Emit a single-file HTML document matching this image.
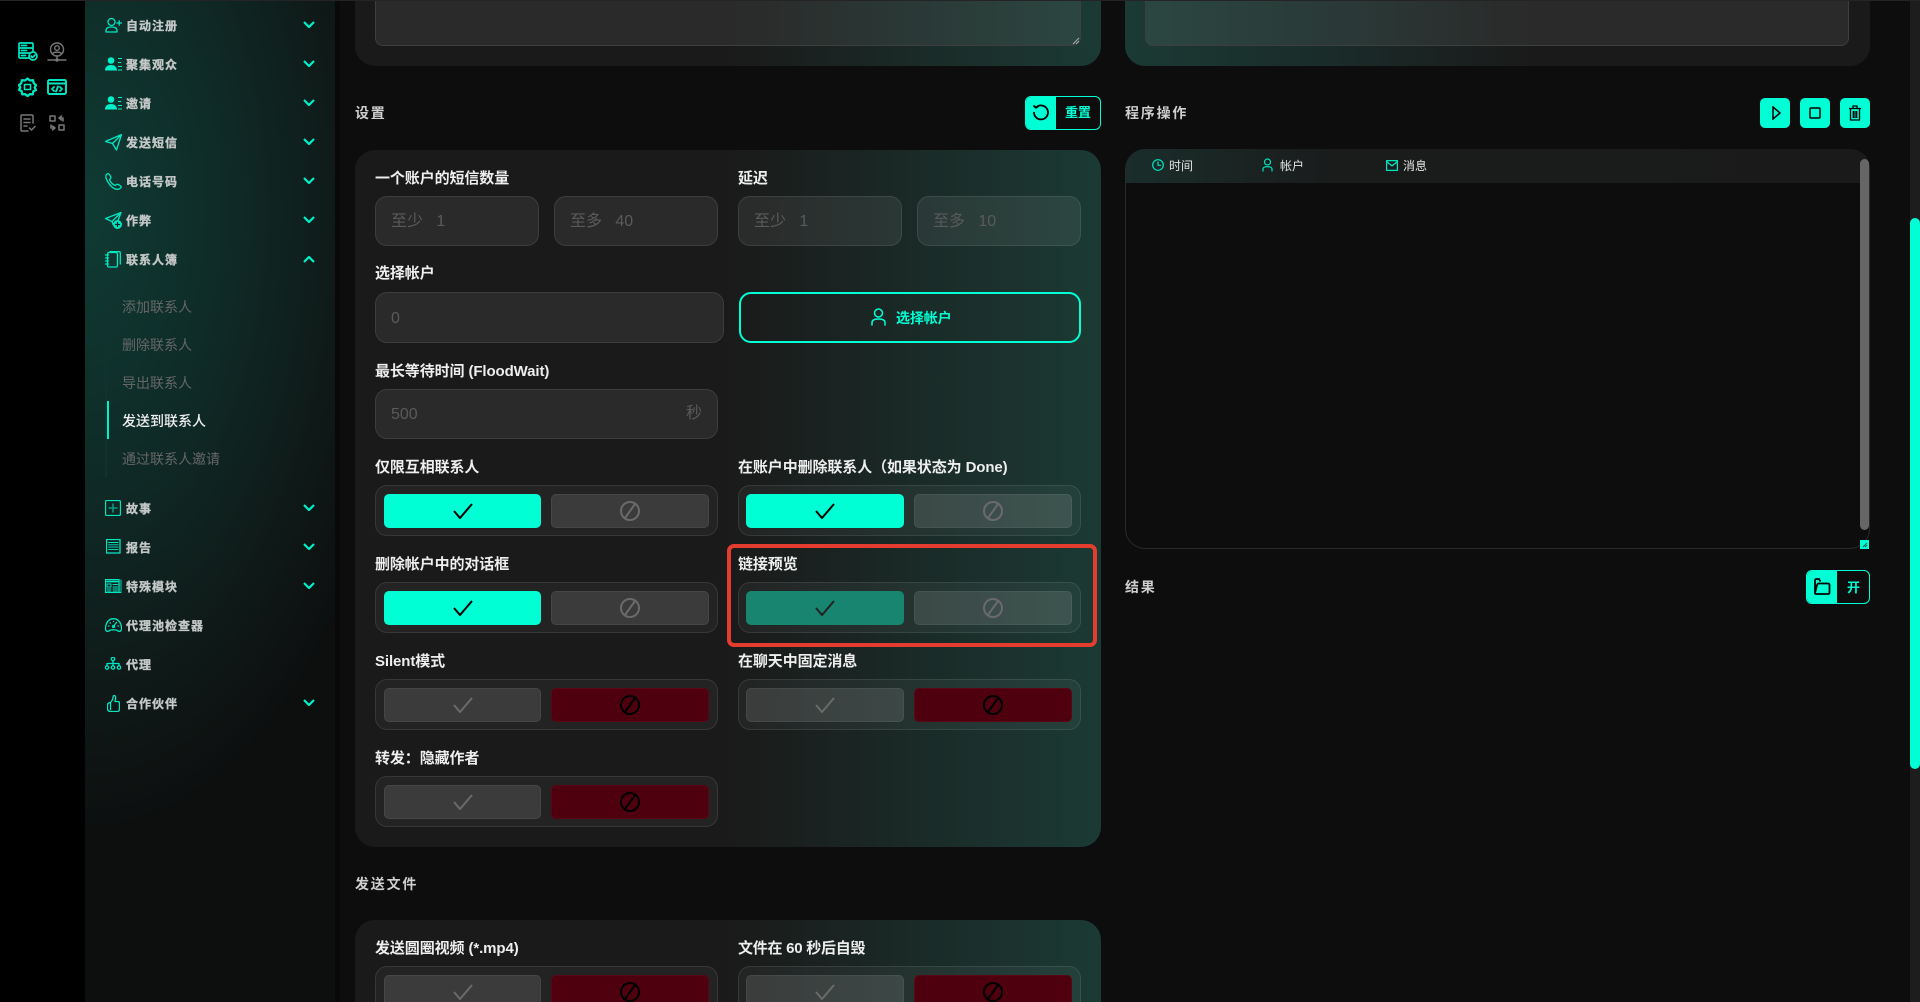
<!DOCTYPE html>
<html lang="zh"><head><meta charset="utf-8"><title>Settings</title>
<style>
*{box-sizing:border-box}
html,body{margin:0;padding:0;width:1920px;height:1002px;overflow:hidden;background:#0d0d0d}
body{position:relative;font-family:"Liberation Sans","Noto Sans CJK SC",sans-serif;color:#ddd}
.a,.a2,.m,.s,.l,.t,.g,.i,.in,svg{position:absolute}
#rail{position:absolute;left:0;top:0;width:85px;height:1002px;background:#000}
#side{position:absolute;left:85px;top:0;width:250px;height:1002px;background:radial-gradient(ellipse 330px 620px at 0 210px,#0f3b34 0%,#0f2a26 45%,#0f1b19 75%,#0d0f0f 100%),#0d0d0d}
#gap{position:absolute;left:335px;top:0;width:5px;height:1002px;background:#090909}
.m{left:126px;font-size:12px;font-weight:700;letter-spacing:1px;line-height:16px;color:#c4c8c7;white-space:nowrap;font-family:"WenQuanYi Zen Hei","Noto Sans CJK SC",sans-serif;-webkit-text-stroke:.35px #c4c8c7}
.s{left:122px;font-size:14px;line-height:20px;color:#666;white-space:nowrap}
.ic{fill:none;stroke:#00e6c2;stroke-width:1.3;stroke-linecap:round;stroke-linejoin:round}
.ch{fill:none;stroke:#00f0cb;stroke-width:2.2;left:303px;width:12px;height:7px}
.p{position:absolute;background:linear-gradient(90deg,#1a1a1a 0,#1a1a1a 50%,#1b3a34 100%);border-radius:20px}
.p2{background:linear-gradient(90deg,#1b3a34 0,#1a2a28 30%,#1a1a1a 55%)}
.t{font-size:14px;line-height:20px;letter-spacing:1.8px;color:#cfcfcf;font-weight:700;white-space:nowrap}
.l{font-size:15px;line-height:20px;font-weight:700;color:#eee;white-space:nowrap;letter-spacing:-.1px;margin-top:1px}
.in{height:50px;border:1px solid rgba(255,255,255,.09);background:rgba(255,255,255,.07);border-radius:12px;font-size:16px;line-height:50px;color:#5a5a5a;padding-left:15px;white-space:pre}
.g{width:343px;height:51px;border:1px solid rgba(255,255,255,.09);background:rgba(255,255,255,.045);border-radius:12px}
.b{position:absolute;top:8px;height:34px;width:158px;border-radius:5px;border:1px solid rgba(255,255,255,.06);background:rgba(255,255,255,.11)}
.b1{left:8px;width:157px}.b2{left:175px}
.R .b1{left:7px;width:158px}
.b.on{background:#00ffd5;border-color:#00ffd5}
.b.dim{background:#188571;border-color:#188571}
.b.red{background:#4f000f;border-color:#5a0615}
.b svg{left:50%;top:50%;transform:translate(-50%,-50%)}
.ck{width:20px;height:16px;fill:none;stroke:#6a6a6a;stroke-width:2}
.on .ck{stroke:#000}.dim .ck{stroke:#222}
.bn{width:20px;height:20px;fill:none;stroke:#6a6a6a;stroke-width:2}
.red .bn{stroke:#000}
.sq{position:absolute;top:98px;width:30px;height:30px;background:#00ffd5;border-radius:5px}
.th{position:absolute;top:158px;font-size:12px;line-height:16px;color:#e4e4e4;white-space:nowrap}
</style></head><body>
<div id="rail"></div><div id="side"></div><div id="gap"></div>
<div style="position:absolute;left:0;top:0;width:1920px;height:1px;background:#242424;z-index:5"></div>

<!-- rail icons -->
<svg class="ic" style="left:18px;top:42px;stroke-width:1.7" width="20" height="19" viewBox="0 0 20 19"><path d="M15 9V2q0-1-1-1H2q-1 0-1 1v13q0 1 1 1h9M1 6h14M1 11h11M3.500 3.500h5M3.500 8.500h5M3.500 13.500h4"/><circle cx="15" cy="14" r="4"/><path d="M13 14l1.500 1.500 2.500-2.500"/></svg>
<svg class="ic" style="left:47px;top:42px;stroke:#777;stroke-width:1.400" width="20" height="20" viewBox="0 0 20 20"><circle cx="10" cy="7.500" r="6.500"/><circle cx="10" cy="6" r="2.300"/><path d="M5.500 12c1-2.500 8-2.500 9 0M10 14v4M1 18h18"/><circle cx="10" cy="18" r="1"/></svg>
<svg class="ic" style="left:18px;top:77px;stroke-width:2.300" width="19" height="20" viewBox="0 0 19 20"><path d="M9.500 1.500l2.500 2 3 -.3.800 3 2.200 2-1.300 2.300 1.300 2.500-2.700 1.300-.5 3-3-.2-2.300 2-2.300-2-3 .2-.5-3L1 12.800l1.300-2.300L1 8.200l2.200-2L4 3.200l3 .3z"/><rect x="6.500" y="7.500" width="6" height="5" stroke-width="1.600"/></svg>
<svg class="ic" style="left:47px;top:79px;stroke-width:1.900" width="20" height="16" viewBox="0 0 20 16"><rect x="1" y="1" width="18" height="14" rx="1.500"/><path d="M1 4.500h18M7 8l-2 2 2 2M13 8l2 2-2 2M11 7.500l-2 5"/></svg>
<svg class="ic" style="left:20px;top:114px;stroke:#777;stroke-width:1.500" width="16" height="18" viewBox="0 0 16 18"><path d="M13 9V2q0-1-1-1H2q-1 0-1 1v14q0 1 1 1h6M4 5h6M4 8.500h6M4 12h3M9.500 14l2 2 3.500-3.500"/></svg>
<svg class="ic" style="left:49px;top:115px;stroke:#777;stroke-width:1.500" width="16" height="16" viewBox="0 0 16 16"><rect x="1" y="1" width="5" height="5"/><rect x="10" y="10" width="5" height="5"/><path d="M10 3h4v3M12.500 1L10 3l2.500 2M6 13H2v-3M3.500 15L6 13 3.500 11"/></svg>

<!-- sidebar -->
<svg class="ic" style="left:105px;top:18px" width="17" height="15" viewBox="0 0 17 15"><circle cx="6.500" cy="4" r="3.500"/><path d="M1 14v-1.500C1 10 3.500 9 6.500 9s5.500 1 5.500 3.500V14zM12 5h4.500M14.200 2.800v4.400"/></svg><div class="m" style="top:18px">自动注册</div>
<svg class="ic" style="left:105px;top:57px;fill:#00f0cb;stroke:none" width="17" height="14" viewBox="0 0 17 14"><circle cx="6" cy="3.500" r="3.300"/><path d="M0 13.500c0-4 3-5.500 6-5.500s6 1.500 6 5.500zM13 1h4v1h-4zM13 5h3v1h-3zM13 9h4v1h-4zM13 12.500h4v1h-4z"/></svg><div class="m" style="top:57px">聚集观众</div>
<svg class="ic" style="left:105px;top:96px;fill:#00f0cb;stroke:none" width="17" height="14" viewBox="0 0 17 14"><circle cx="6" cy="3.500" r="3.300"/><path d="M0 13.500c0-4 3-5.500 6-5.500s6 1.500 6 5.500zM13 1h4v1h-4zM13 5h3v1h-3zM13 9h4v1h-4zM13 12.500h4v1h-4z"/></svg><div class="m" style="top:96px">邀请</div>
<svg class="ic" style="left:105px;top:134px" width="17" height="17" viewBox="0 0 17 17"><path d="M.5 7.500L16.500.5 11.500 16 7.500 9.500zM7.500 9.500l9-9"/></svg><div class="m" style="top:135px">发送短信</div>
<svg class="ic" style="left:105px;top:173px" width="17" height="17" viewBox="0 0 17 17"><path d="M2.500.7C.5 1.500.3 4 2 7.500c2.500 5 7 9 10.500 8.800 2.500-.2 4-1.800 3.500-2.800-.5-.8-2.500-2-3.500-2.300-1-.2-1.500 1.300-2.500 1.200C8 12 5 8.500 4.700 7c-.2-1 1.300-1.300 1.200-2.500C5.700 3 4 .2 2.500.7z"/></svg><div class="m" style="top:174px">电话号码</div>
<svg class="ic" style="left:105px;top:212px" width="17" height="17" viewBox="0 0 17 17"><path d="M.5 6.500L16 .5l-3 8M.5 6.500l6.500 3 9-9M7 9.500l1 3"/><circle cx="12.500" cy="12.500" r="3.800" fill="#00e6c2"/><path d="M12.500 10.500v4M10.500 12.500h4" stroke="#06231f"/></svg><div class="m" style="top:213px">作弊</div>
<svg class="ic" style="left:105px;top:251px" width="16" height="17" viewBox="0 0 16 17"><rect x="2.500" y="1.500" width="10" height="14.500" rx="1.500"/><path d="M5 .6h9q1.300 0 1.300 1.400v11M.5 4h3M.5 7h3M.5 10h3M.5 13h3"/></svg><div class="m" style="top:252px">联系人簿</div>

<div style="position:absolute;left:105px;top:287px;width:2px;height:190px;background:#14322d"></div>
<div style="position:absolute;left:107px;top:401px;width:2px;height:38px;background:#00f0cb"></div>
<div class="s" style="top:297px">添加联系人</div>
<div class="s" style="top:335px">删除联系人</div>
<div class="s" style="top:373px">导出联系人</div>
<div class="s" style="top:411px;color:#eee;font-weight:500">发送到联系人</div>
<div class="s" style="top:449px">通过联系人邀请</div>

<svg class="ic" style="left:105px;top:500px" width="16" height="16" viewBox="0 0 16 16"><rect x=".5" y=".5" width="15" height="15" rx="1.500"/><path d="M8 4v8M4 8h8" stroke="#0b9c84" stroke-width="1.500"/></svg><div class="m" style="top:501px">故事</div>
<svg class="ic" style="left:106px;top:539px" width="15" height="15" viewBox="0 0 15 15"><rect x=".5" y=".5" width="13.500" height="13.500"/><path d="M2.500 3.500h9.500M2.500 5.800h9.500M2.500 8.100h9.500M2.500 10.400h9.500" stroke-width=".9"/></svg><div class="m" style="top:540px">报告</div>
<svg class="ic" style="left:105px;top:579px" width="17" height="14" viewBox="0 0 17 14"><rect x=".5" y=".5" width="13.500" height="13"/><path d="M2 2.500h10.500" stroke-width="1.800"/><path d="M2 5h4v3H2zM2 10h4M2 12h4M8 5.500h4.500M8 8h4.500M8 10h4.500M8 12h4.500M16 1v12.500h-2" stroke-width=".9"/></svg><div class="m" style="top:579px">特殊模块</div>
<svg class="ic" style="left:105px;top:618px" width="17" height="14" viewBox="0 0 17 14"><path d="M2 13.300C.2 12.500.3 9.500 1 7 2 3 5 .7 8.500.7S15 3 16 7c.7 2.500.8 5.500-1 6.300-2 .2-3-1-3-1-2-.6-5-.6-7 0 0 0-1 1.200-3 1zM8.500 8l3-3.500"/><circle cx="8.500" cy="8.500" r="1"/><path d="M3.500 8h.5M5 5h.5M8.500 3.500h.1M13 8h.5"/></svg><div class="m" style="top:618px">代理池检查器</div>
<svg class="ic" style="left:105px;top:657px" width="16" height="13" viewBox="0 0 16 13"><circle cx="8" cy="2" r="1.700"/><circle cx="2" cy="10.500" r="1.700"/><circle cx="8" cy="10.500" r="1.700"/><circle cx="14" cy="10.500" r="1.700"/><path d="M8 4v4.800M2 8.800V6.500h12v2.300"/></svg><div class="m" style="top:657px">代理</div>
<svg class="ic" style="left:107px;top:695px" width="13" height="17" viewBox="0 0 13 17"><path d="M3.500 7.500V14.500M3.500 7.500C5 6 6 4 6.200 1.500 6.300.2 8 .2 8.500 1.500c.4 1.200 0 3.500-.5 5h3c1 0 1.500.8 1.500 2V14c0 1.500-1 2.500-2.500 2.500H4C2 16.500.5 16 .5 13.500V10C.5 8.500 2 7.500 3.500 7.500z"/></svg><div class="m" style="top:696px">合作伙伴</div>

<svg class="ch" style="top:21px" viewBox="0 0 12 7"><path d="M1 1l5 5 5-5"/></svg>
<svg class="ch" style="top:60px" viewBox="0 0 12 7"><path d="M1 1l5 5 5-5"/></svg>
<svg class="ch" style="top:99px" viewBox="0 0 12 7"><path d="M1 1l5 5 5-5"/></svg>
<svg class="ch" style="top:138px" viewBox="0 0 12 7"><path d="M1 1l5 5 5-5"/></svg>
<svg class="ch" style="top:177px" viewBox="0 0 12 7"><path d="M1 1l5 5 5-5"/></svg>
<svg class="ch" style="top:216px" viewBox="0 0 12 7"><path d="M1 1l5 5 5-5"/></svg>
<svg class="ch" style="top:256px" viewBox="0 0 12 7"><path d="M1 6l5-5 5 5"/></svg>
<svg class="ch" style="top:504px" viewBox="0 0 12 7"><path d="M1 1l5 5 5-5"/></svg>
<svg class="ch" style="top:543px" viewBox="0 0 12 7"><path d="M1 1l5 5 5-5"/></svg>
<svg class="ch" style="top:582px" viewBox="0 0 12 7"><path d="M1 1l5 5 5-5"/></svg>
<svg class="ch" style="top:699px" viewBox="0 0 12 7"><path d="M1 1l5 5 5-5"/></svg>

<!-- top panels -->
<div class="p" style="left:355px;top:-40px;width:746px;height:106px"></div>
<div class="in" style="left:375px;top:-20px;width:706px;height:66px;border-radius:8px;border-color:#3c3f3e;box-shadow:none"></div>
<svg style="left:1072px;top:37px" width="8" height="8" viewBox="0 0 8 8"><path d="M1 7l6-6M4 7l3-3" stroke="#aaa" stroke-width="1"/></svg>
<div class="p p2" style="left:1125px;top:-40px;width:745px;height:106px"></div>
<div class="in" style="left:1145px;top:-20px;width:704px;height:66px;border-radius:8px;border-color:#3c3f3e"></div>

<!-- settings header -->
<div class="t" style="left:355px;top:103px">设置</div>
<div style="position:absolute;left:1025px;top:96px;width:76px;height:34px;border:1px solid #00ffd5;border-radius:6px;overflow:hidden">
<div style="position:absolute;left:0;top:0;width:30px;height:34px;background:#00ffd5"></div>
<svg style="left:6px;top:5px" width="17" height="20" viewBox="0 0 17 20" fill="none" stroke="#000" stroke-width="1.800"><path d="M4 5.500a7 7 0 1 1-2 4.500M1.500 3.500L4 5.800l2.500-1.800"/></svg>
<div style="position:absolute;left:39px;top:7px;font-size:13px;line-height:18px;font-weight:700;color:#00ffd5;white-space:nowrap">重置</div>
</div>

<!-- settings panel -->
<div class="p" style="left:355px;top:150px;width:746px;height:697px"></div>
<div class="l" style="left:375px;top:168px">一个账户的短信数量</div>
<div class="l" style="left:738px;top:168px">延迟</div>
<div class="in" style="left:375px;top:196px;width:164px">至少   1</div>
<div class="in" style="left:554px;top:196px;width:164px">至多   40</div>
<div class="in" style="left:738px;top:196px;width:164px">至少   1</div>
<div class="in" style="left:917px;top:196px;width:164px">至多   10</div>
<div class="l" style="left:375px;top:263px">选择帐户</div>
<div class="in" style="left:375px;top:292px;width:349px;height:51px;line-height:51px">0</div>
<div style="position:absolute;left:739px;top:292px;width:342px;height:51px;border:2px solid #00ffd5;border-radius:12px"></div>
<svg class="ic" style="left:871px;top:308px;stroke-width:1.500;stroke:#00ffd5" width="15" height="18" viewBox="0 0 15 18"><circle cx="7.500" cy="5" r="4"/><path d="M1 17v-2.500C1 12 3 11 7.500 11S14 12 14 14.500V17"/></svg>
<div class="l" style="left:896px;top:307px;font-size:14px;color:#00ffd5">选择帐户</div>
<div class="l" style="left:375px;top:361px">最长等待时间 (FloodWait)</div>
<div class="in" style="left:375px;top:389px;width:343px">500</div>
<div style="position:absolute;left:686px;top:403px;font-size:16px;line-height:22px;color:#5a5a5a">秒</div>

<div class="l" style="left:375px;top:457px">仅限互相联系人</div>
<div class="g" style="left:375px;top:485px"><div class="b b1 on"><svg class="ck" viewBox="0 0 20 16"><path d="M1 8l6 7L19 1"/></svg></div><div class="b b2"><svg class="bn" viewBox="0 0 20 20"><circle cx="10" cy="10" r="9"/><path d="M15 3L5 17"/></svg></div></div>
<div class="l" style="left:738px;top:457px">在账户中删除联系人（如果状态为 Done)</div>
<div class="g R" style="left:738px;top:485px"><div class="b b1 on"><svg class="ck" viewBox="0 0 20 16"><path d="M1 8l6 7L19 1"/></svg></div><div class="b b2"><svg class="bn" viewBox="0 0 20 20"><circle cx="10" cy="10" r="9"/><path d="M15 3L5 17"/></svg></div></div>

<div class="l" style="left:375px;top:554px">删除帐户中的对话框</div>
<div class="g" style="left:375px;top:582px"><div class="b b1 on"><svg class="ck" viewBox="0 0 20 16"><path d="M1 8l6 7L19 1"/></svg></div><div class="b b2"><svg class="bn" viewBox="0 0 20 20"><circle cx="10" cy="10" r="9"/><path d="M15 3L5 17"/></svg></div></div>
<div class="l" style="left:738px;top:554px">链接预览</div>
<div class="g R" style="left:738px;top:582px"><div class="b b1 dim"><svg class="ck" viewBox="0 0 20 16"><path d="M1 8l6 7L19 1"/></svg></div><div class="b b2"><svg class="bn" viewBox="0 0 20 20"><circle cx="10" cy="10" r="9"/><path d="M15 3L5 17"/></svg></div></div>
<div style="position:absolute;left:727px;top:544px;width:370px;height:103px;border:4px solid #e53c30;border-radius:7px"></div>

<div class="l" style="left:375px;top:651px">Silent模式</div>
<div class="g" style="left:375px;top:679px"><div class="b b1"><svg class="ck" viewBox="0 0 20 16"><path d="M1 8l6 7L19 1"/></svg></div><div class="b b2 red"><svg class="bn" viewBox="0 0 20 20"><circle cx="10" cy="10" r="9"/><path d="M15 3L5 17"/></svg></div></div>
<div class="l" style="left:738px;top:651px">在聊天中固定消息</div>
<div class="g R" style="left:738px;top:679px"><div class="b b1"><svg class="ck" viewBox="0 0 20 16"><path d="M1 8l6 7L19 1"/></svg></div><div class="b b2 red"><svg class="bn" viewBox="0 0 20 20"><circle cx="10" cy="10" r="9"/><path d="M15 3L5 17"/></svg></div></div>

<div class="l" style="left:375px;top:748px">转发：隐藏作者</div>
<div class="g" style="left:375px;top:776px"><div class="b b1"><svg class="ck" viewBox="0 0 20 16"><path d="M1 8l6 7L19 1"/></svg></div><div class="b b2 red"><svg class="bn" viewBox="0 0 20 20"><circle cx="10" cy="10" r="9"/><path d="M15 3L5 17"/></svg></div></div>

<div class="t" style="left:355px;top:874px">发送文件</div>
<div class="p" style="left:355px;top:920px;width:746px;height:120px"></div>
<div class="l" style="left:375px;top:938px">发送圆圈视频 (*.mp4)</div>
<div class="g" style="left:375px;top:966px"><div class="b b1"><svg class="ck" viewBox="0 0 20 16"><path d="M1 8l6 7L19 1"/></svg></div><div class="b b2 red"><svg class="bn" viewBox="0 0 20 20"><circle cx="10" cy="10" r="9"/><path d="M15 3L5 17"/></svg></div></div>
<div class="l" style="left:738px;top:938px;letter-spacing:-.25px">文件在 60 秒后自毁</div>
<div class="g R" style="left:738px;top:966px"><div class="b b1"><svg class="ck" viewBox="0 0 20 16"><path d="M1 8l6 7L19 1"/></svg></div><div class="b b2 red"><svg class="bn" viewBox="0 0 20 20"><circle cx="10" cy="10" r="9"/><path d="M15 3L5 17"/></svg></div></div>

<!-- right column -->
<div class="t" style="left:1125px;top:103px">程序操作</div>
<div class="sq" style="left:1760px"><svg style="left:12px;top:8px" width="9" height="14" viewBox="0 0 9 14" fill="none" stroke="#000" stroke-width="1.500"><path d="M1 1l7 6-7 6z"/></svg></div>
<div class="sq" style="left:1800px"><svg style="left:9px;top:9px" width="12" height="12" viewBox="0 0 12 12" fill="none" stroke="#000" stroke-width="1.500"><rect x="1" y="1" width="10" height="10" rx="1"/></svg></div>
<div class="sq" style="left:1840px"><svg style="left:8px;top:7px" width="14" height="16" viewBox="0 0 14 16" fill="none" stroke="#000" stroke-width="1.300"><path d="M1 3.500h12M5 3.500V1h4v2.500M2.500 3.500V15h9V3.500M5.300 6v7M7 6v7M8.700 6v7"/></svg></div>

<div style="position:absolute;left:1125px;top:149px;width:745px;height:400px;border:1px solid #292929;border-top:0;border-radius:20px;background:#0d0d0d;overflow:hidden">
<div style="position:absolute;left:0;top:0;width:100%;height:34px;background:linear-gradient(90deg,#1a2d2a 0,#1a1c1c 28%,#1a1a1a 100%)"></div>
</div>
<svg class="ic" style="left:1152px;top:159px;stroke-width:1.200" width="12" height="12" viewBox="0 0 12 12"><circle cx="6" cy="6" r="5.300"/><path d="M6 3v3.300h2.500"/></svg><div class="th" style="left:1169px">时间</div>
<svg class="ic" style="left:1262px;top:158px;stroke-width:1.200" width="11" height="14" viewBox="0 0 11 14"><circle cx="5.500" cy="4" r="3"/><path d="M1 13v-2c0-1.500 1.500-2.300 4.500-2.300S10 9.500 10 11v2"/></svg><div class="th" style="left:1280px">帐户</div>
<svg class="ic" style="left:1386px;top:160px;stroke-width:1.200" width="12" height="11" viewBox="0 0 12 11"><rect x=".6" y=".6" width="10.800" height="9.800"/><path d="M.6 1.500L6 6l5.400-4.500"/></svg><div class="th" style="left:1403px">消息</div>
<div style="position:absolute;left:1860px;top:159px;width:9px;height:371px;border-radius:5px;background:#666"></div>
<div style="position:absolute;left:1860px;top:540px;width:9px;height:9px;background:#00ffd5"><svg style="left:2px;top:2px" width="6" height="6" viewBox="0 0 6 6"><path d="M1 5l4-4M3 5l2-2" stroke="#0a5a4c" stroke-width="1"/></svg></div>

<div class="t" style="left:1125px;top:577px">结果</div>
<div style="position:absolute;left:1806px;top:570px;width:64px;height:34px;border:1px solid #00ffd5;border-radius:6px;overflow:hidden">
<div style="position:absolute;left:0;top:0;width:30px;height:34px;background:#00ffd5"></div>
<svg style="left:6px;top:7px" width="18" height="17" viewBox="0 0 18 17" fill="none" stroke="#000" stroke-width="1.800"><path d="M2 15V2.500Q2 1 3.500 1H6l1.500 2.500M2 15q0 1 1 1h12q1.500 0 1.500-1.500V7q0-1.500-1.500-1.500H6Q4.500 5.500 4 7L2 15z"/></svg>
<div style="position:absolute;left:40px;top:8px;font-size:13px;line-height:18px;font-weight:700;color:#00ffd5">开</div>
</div>

<!-- page scrollbar -->
<div style="position:absolute;left:1910px;top:0;width:10px;height:1002px;background:#1d1d1d"></div>
<div style="position:absolute;left:1910px;top:218px;width:10px;height:551px;border-radius:5px;background:#00ffd5"></div>
</body></html>
